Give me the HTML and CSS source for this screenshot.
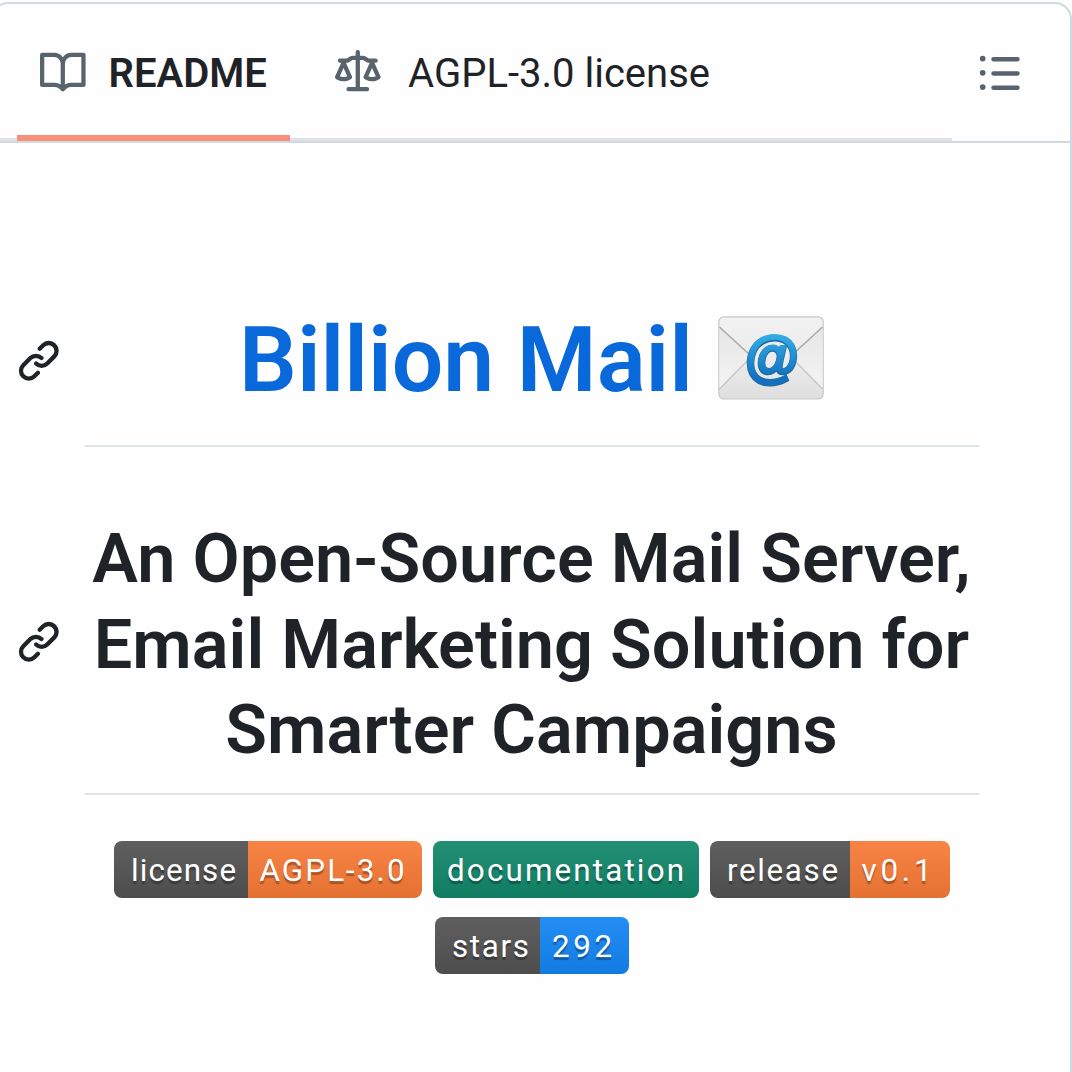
FILE: index.html
```
<!DOCTYPE html>
<html lang="en">
<head>
<meta charset="utf-8">
<title>Billion Mail</title>
<link rel="stylesheet" href="styles.css">
</head>
<body>
<svg class="defs" width="0" height="0" aria-hidden="true">
  <defs>
    <linearGradient id="shade" x1="0" y1="0" x2="0" y2="1">
      <stop offset="0" stop-color="#bbb" stop-opacity=".1"/>
      <stop offset="1" stop-opacity=".1"/>
    </linearGradient>
    <symbol id="link" viewBox="0 0 16 16"><path d="m7.775 3.275 1.25-1.25a3.5 3.5 0 1 1 4.95 4.95l-2.5 2.5a3.5 3.5 0 0 1-4.95 0 .751.751 0 0 1 .018-1.042.751.751 0 0 1 1.042-.018 1.998 1.998 0 0 0 2.83 0l2.5-2.5a2.002 2.002 0 0 0-2.83-2.83l-1.25 1.25a.751.751 0 0 1-1.042-.018.751.751 0 0 1-.018-1.042Zm-4.69 9.64a1.998 1.998 0 0 0 2.83 0l1.25-1.25a.751.751 0 0 1 1.042.018.751.751 0 0 1 .018 1.042l-1.25 1.25a3.5 3.5 0 1 1-4.95-4.95l2.5-2.5a3.5 3.5 0 0 1 4.95 0 .751.751 0 0 1-.018 1.042.751.751 0 0 1-1.042.018 1.998 1.998 0 0 0-2.83 0l-2.5 2.5a1.998 1.998 0 0 0 0 2.83Z"/></symbol>
  </defs>
</svg>
<main class="readme">
  <header class="bar">
    <nav class="tabs">
      <a class="tab tab-active">
        <svg class="icon" viewBox="0 0 16 16"><path d="M0 1.75A.75.75 0 0 1 .75 1h4.253c1.227 0 2.317.59 3 1.501A3.743 3.743 0 0 1 11.006 1h4.245a.75.75 0 0 1 .75.75v10.5a.75.75 0 0 1-.75.75h-4.507a2.25 2.25 0 0 0-1.591.659l-.622.621a.75.75 0 0 1-1.06 0l-.622-.621A2.25 2.25 0 0 0 5.258 13H.75a.75.75 0 0 1-.75-.75Zm7.251 10.324.004-5.073-.002-2.253A2.25 2.25 0 0 0 5.003 2.5H1.5v9h3.757a3.75 3.75 0 0 1 1.994.574ZM8.755 4.75l-.004 7.322a3.752 3.752 0 0 1 1.992-.572H14.5v-9h-3.495a2.25 2.25 0 0 0-2.25 2.25Z"/></svg>
        <span>README</span>
      </a>
      <a class="tab">
        <svg class="icon" viewBox="0 0 16 16"><path d="M8.75.75V2h.985c.304 0 .603.08.867.231l1.29.736c.038.022.08.033.124.033h2.234a.75.75 0 0 1 0 1.5h-.427l2.111 4.692a.75.75 0 0 1-.154.838l-.53-.53.529.531-.001.002-.002.002-.006.006-.006.005-.01.01-.045.04c-.21.176-.441.327-.686.45C14.556 10.78 13.88 11 13 11a4.498 4.498 0 0 1-2.023-.454 3.544 3.544 0 0 1-.686-.45l-.045-.04-.016-.015-.006-.006-.004-.004v-.001a.75.75 0 0 1-.154-.838L12.178 4.5h-.162c-.305 0-.604-.079-.868-.231l-1.29-.736a.245.245 0 0 0-.124-.033H8.75V13h2.5a.75.75 0 0 1 0 1.5h-6.5a.75.75 0 0 1 0-1.5h2.5V3.5h-.984a.245.245 0 0 0-.124.033l-1.289.737c-.265.15-.564.23-.869.23h-.162l2.112 4.692a.75.75 0 0 1-.154.838l-.53-.53.529.531-.001.002-.002.002-.006.006-.016.015-.045.04c-.21.176-.441.327-.686.45C4.556 10.78 3.88 11 3 11a4.498 4.498 0 0 1-2.023-.454 3.544 3.544 0 0 1-.686-.45l-.045-.04-.016-.015-.006-.006-.004-.004v-.001a.75.75 0 0 1-.154-.838L2.178 4.5H1.75a.75.75 0 0 1 0-1.5h2.234a.249.249 0 0 0 .125-.033l1.288-.737c.265-.15.564-.23.869-.23h.984V.75a.75.75 0 0 1 1.5 0Zm2.945 8.477c.285.135.718.273 1.305.273s1.02-.138 1.305-.273L13 6.327Zm-10 0c.285.135.718.273 1.305.273s1.02-.138 1.305-.273L3 6.327Z"/></svg>
        <span>AGPL-3.0 license</span>
      </a>
    </nav>
    <svg class="icon outline" viewBox="0 0 16 16"><path d="M5.75 2.5h8.5a.75.75 0 0 1 0 1.5h-8.5a.75.75 0 0 1 0-1.5Zm0 5h8.5a.75.75 0 0 1 0 1.5h-8.5a.75.75 0 0 1 0-1.5Zm0 5h8.5a.75.75 0 0 1 0 1.5h-8.5a.75.75 0 0 1 0-1.5ZM2 14a1 1 0 1 1 0-2 1 1 0 0 1 0 2Zm1-6a1 1 0 1 1-2 0 1 1 0 0 1 2 0ZM2 4a1 1 0 1 1 0-2 1 1 0 0 1 0 2Z"/></svg>
  </header>

  <article class="body">
    <div class="row row-title">
      <svg class="anchor"><use href="#link"/></svg>
      <h1 class="title">
        <a class="title-link">Billion Mail</a>
        <svg class="emoji" viewBox="0 0 106 84">
          <defs>
            <linearGradient id="paper" x1="0" y1="0" x2="0" y2="1"><stop offset="0" stop-color="#f1f1f1"/><stop offset=".55" stop-color="#ececec"/><stop offset="1" stop-color="#dedede"/></linearGradient>
            <linearGradient id="side" x1="0" y1="0" x2="0" y2="1"><stop offset="0" stop-color="#e6e6e6"/><stop offset="1" stop-color="#f4f4f4"/></linearGradient>
            <linearGradient id="at" x1="0" y1="0" x2="0" y2="1"><stop offset=".1" stop-color="#35b3ea"/><stop offset=".85" stop-color="#1470bd"/></linearGradient>
          </defs>
          <rect x=".8" y=".8" width="104.4" height="82.2" rx="5" fill="url(#paper)" stroke="#c9c9c9" stroke-width="1.2"/>
          <path d="M1.4 11 33 40 1.4 72ZM104.6 11 73 40l31.6 32Z" fill="url(#side)"/>
          <path d="M1.5 73 33 41M104.5 73 73 41" fill="none" stroke="#c6c6c6" stroke-width="1.3"/>
          <path d="M1.5 11 33 40M104.5 11 73 40" fill="none" stroke="#aaa" stroke-width="1.6"/>
          <text class="at at-edge" x="53" y="59.500" text-anchor="middle" aria-hidden="true">@</text>
          <text class="at" x="53" y="59" text-anchor="middle">@</text>
        </svg>
      </h1>
    </div>

    <div class="row row-subtitle">
      <svg class="anchor"><use href="#link"/></svg>
      <h2 class="subtitle">An Open-Source Mail Server,<br>Email Marketing Solution for<br>Smarter Campaigns</h2>
    </div>

    <div class="badges">
      <svg class="badge" width="308" height="57">
        <path class="grey" d="M134 0H8a8 8 0 0 0-8 8v41a8 8 0 0 0 8 8h126Z"/>
        <path class="orange" d="M134 0h166a8 8 0 0 1 8 8v41a8 8 0 0 1-8 8H134Z"/>
        <rect width="308" height="57" rx="8" fill="url(#shade)"/>
        <text x="17" y="40" textLength="105">license</text>
        <text x="145.500" y="40" textLength="145">AGPL-3.0</text>
      </svg>
      <svg class="badge" width="266" height="57">
        <rect class="green" width="266" height="57" rx="8"/>
        <rect width="266" height="57" rx="8" fill="url(#shade)"/>
        <text x="14" y="40" textLength="237">documentation</text>
      </svg>
      <svg class="badge" width="240" height="57">
        <path class="grey" d="M140 0H8a8 8 0 0 0-8 8v41a8 8 0 0 0 8 8h132Z"/>
        <path class="orange" d="M140 0h92a8 8 0 0 1 8 8v41a8 8 0 0 1-8 8h-92Z"/>
        <rect width="240" height="57" rx="8" fill="url(#shade)"/>
        <text x="17" y="40" textLength="111">release</text>
        <text x="151.500" y="40" textLength="70">v0.1</text>
      </svg>
      <svg class="badge" width="194" height="57">
        <path class="grey" d="M105 0H8a8 8 0 0 0-8 8v41a8 8 0 0 0 8 8h97Z"/>
        <path class="blue" d="M105 0h81a8 8 0 0 1 8 8v41a8 8 0 0 1-8 8h-81Z"/>
        <rect width="194" height="57" rx="8" fill="url(#shade)"/>
        <text x="17" y="40" textLength="77">stars</text>
        <text x="117" y="40" textLength="60">292</text>
      </svg>
    </div>
  </article>
</main>
</body>
</html>
```
FILE: styles.css
```
* { box-sizing: border-box; }

body {
  margin: 0;
  height: 1072px;
  overflow: hidden;
  background: #fefefe;
  color: #1f2328;
  font-family: Roboto, sans-serif;
}

.defs { display: block; }

.readme {
  width: 1081px;
  height: 1100px;
  margin: 2px 0 0 -9px;
  border: 2px solid #d1d9e0;
  border-radius: 17px;
}

.bar {
  display: flex;
  height: 139px;
  border-bottom: 2px solid #d1d9e0;
}

.tabs {
  display: flex;
  gap: 22px;
  width: 952px;
  margin: 0 24.500px 0 7px;
  padding-left: 17px;
  box-shadow: inset 0 -3px #dee3e8;
}

.tab {
  display: flex;
  align-items: center;
  gap: 27.500px;
  padding: 3px 23px 0;
  font-size: 40px;
  line-height: 60px;
}

.tab-active {
  gap: 23px;
  width: 273px;
  border-bottom: 6px solid #f78f7b;
  padding-top: 9px;
  font-weight: 600;
}

.tab .icon { margin-bottom: 2px; }

.icon {
  flex: none;
  width: 45.600px;
  height: 45.600px;
  fill: #59636e;
}

.outline { margin-top: 46px; }

.body { padding: 0 92px 0 23px; }

.row {
  display: grid;
  grid-template-columns: 46px 894px;
  column-gap: 22.500px;
  align-items: center;
}

.row-title { padding-top: 159.500px; }
.row-subtitle { padding-top: 70px; }

.anchor {
  width: 45.600px;
  height: 45.600px;
  fill: #1f2328;
}

.row-title .anchor { margin-bottom: 27px; }
.row-subtitle .anchor { margin-bottom: 28px; }

.title, .subtitle {
  margin: 0;
  border-bottom: 2px solid #dfe4e8;
  text-align: center;
  font-weight: 600;
  line-height: 1.25;
}

.title {
  display: flex;
  justify-content: center;
  gap: 25px;
  padding-bottom: 28.500px;
  font-size: 91.200px;
}

.title-link { color: #0969da; }

.emoji {
  width: 106px;
  height: 84px;
  margin-top: 13px;
}

.at {
  font: italic bold 55px "Liberation Sans", sans-serif;
  fill: url(#at);
  stroke: url(#at);
  stroke-width: 2;
}

.at-edge {
  fill: #1c6da5;
  stroke: #1c6da5;
  stroke-width: 3.200;
}

.subtitle {
  padding-bottom: 19px;
  font-size: 68.400px;
  letter-spacing: .05px;
}

.badges {
  display: flex;
  flex-wrap: wrap;
  justify-content: center;
  gap: 19px 11px;
  width: 894px;
  margin: 46px 0 0 68.500px;
}

.badge { display: block; }

.badge text {
  fill: #fff;
  font-size: 31.350px;
  text-shadow: 0 3px 1px rgba(1, 1, 1, .3);
}

.grey { fill: #555; }
.orange { fill: #fe7d37; }
.green { fill: #128a6d; }
.blue { fill: #1489fb; }
```
